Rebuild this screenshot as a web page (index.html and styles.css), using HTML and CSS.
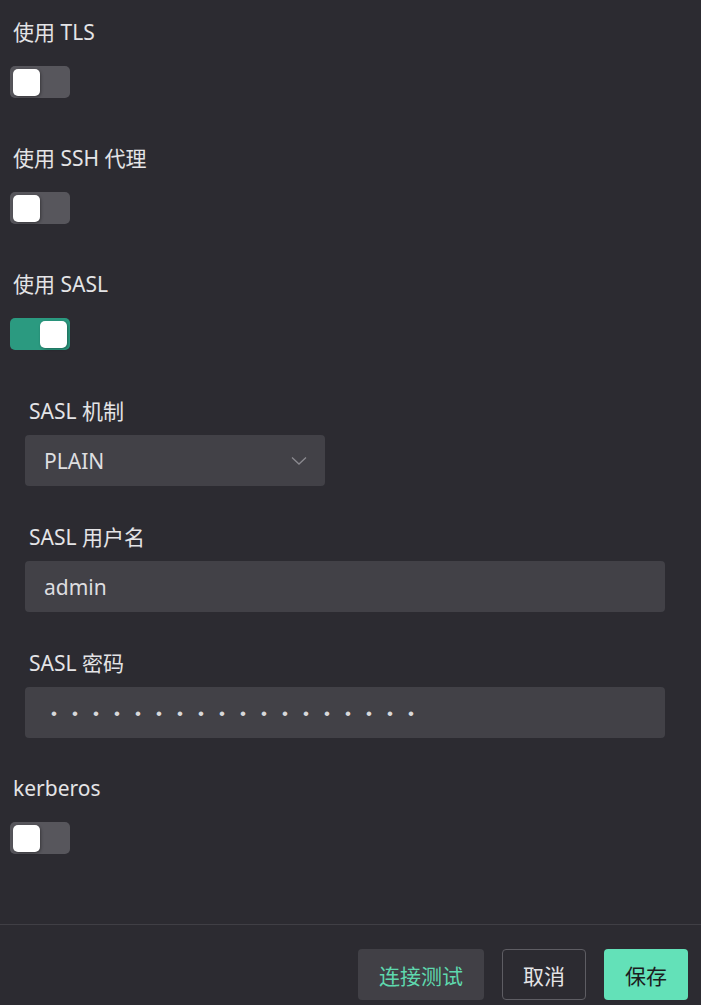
FILE: index.html
```html
<!DOCTYPE html>
<html lang="zh-CN">
<head>
<meta charset="utf-8">
<title>SASL 设置</title>
<link rel="stylesheet" href="styles.css">
</head>
<body>
<div class="page">
  <div class="form">
    <div class="field">
      <div class="label">使用 TLS</div>
      <div class="switch"><span class="knob"></span></div>
    </div>
    <div class="field">
      <div class="label">使用 SSH 代理</div>
      <div class="switch"><span class="knob"></span></div>
    </div>
    <div class="field">
      <div class="label">使用 SASL</div>
      <div class="switch on"><span class="knob"></span></div>
    </div>
    <div class="nested">
      <div class="subfield">
        <div class="label sub">SASL 机制</div>
        <div class="select">
          <span class="value">PLAIN</span>
          <svg class="chevron" width="16" height="8" viewBox="0 0 16 8"><path d="M1 0.5 L8 7 L15 0.5" fill="none" stroke="#8b8a90" stroke-width="1.3"/></svg>
        </div>
      </div>
      <div class="subfield">
        <div class="label sub">SASL 用户名</div>
        <div class="input"><span class="value">admin</span></div>
      </div>
      <div class="subfield">
        <div class="label sub">SASL 密码</div>
        <div class="input"><span class="dots">••••••••••••••••••</span></div>
      </div>
    </div>
    <div class="field">
      <div class="label">kerberos</div>
      <div class="switch"><span class="knob"></span></div>
    </div>
  </div>
  <div class="footer">
    <button class="btn test">连接测试</button>
    <button class="btn cancel">取消</button>
    <button class="btn save">保存</button>
  </div>
</div>
</body>
</html>
```
FILE: styles.css
```css
html, body {
  margin: 0;
  padding: 0;
  background: #2c2b31;
}
body {
  font-family: "Noto Sans", "Noto Sans CJK SC", sans-serif;
  color: #e2e2e4;
  width: 701px;
  height: 1005px;
  overflow: hidden;
}
.page {
  display: flex;
  flex-direction: column;
}
.form {
  padding: 20px 0 0 10px;
  height: 924px;
  box-sizing: border-box;
  display: flex;
  flex-direction: column;
}
.field {
  display: flex;
  flex-direction: column;
  align-items: flex-start;
  margin-bottom: 48px;
}
.label {
  font-size: 21px;
  line-height: 24px;
  height: 24px;
  padding-left: 3px;
  color: #e4e4e6;
  white-space: nowrap;
}
.field .label {
  margin-bottom: 22px;
}
.switch {
  width: 60px;
  height: 32px;
  border-radius: 5px;
  background: #57565c;
  position: relative;
  box-sizing: border-box;
}
.switch .knob {
  position: absolute;
  left: 3px;
  top: 3px;
  width: 27px;
  height: 27px;
  border-radius: 5px;
  background: #ffffff;
  box-shadow: 1px 1px 3px rgba(0,0,0,0.35);
}
.switch.on {
  background: #2b9a80;
}
.switch.on .knob {
  left: 30px;
}
.nested {
  padding-left: 15px;
  padding-top: 1px;
  display: flex;
  flex-direction: column;
  gap: 39px;
  margin-bottom: 38px;
}
.subfield {
  display: flex;
  flex-direction: column;
  align-items: flex-start;
}
.label.sub {
  padding-left: 4px;
  margin-bottom: 12px;
}
.select, .input {
  height: 51px;
  background: #424147;
  border-radius: 4px;
  box-sizing: border-box;
  display: flex;
  align-items: center;
  padding: 0 18px 0 19px;
}
.select {
  width: 300px;
  justify-content: space-between;
}
.input {
  width: 640px;
}
.value {
  font-size: 21px;
  color: #dedee0;
  line-height: 24px;
}
.chevron {
  margin-top: 1px;
}
.dots {
  font-family: "Liberation Sans", sans-serif;
  font-size: 17px;
  letter-spacing: 15.05px;
  color: #d8d8da;
  padding-left: 7px;
  padding-top: 2px;
}
.footer {
  border-top: 1px solid #403f45;
  display: flex;
  justify-content: flex-end;
  gap: 18px;
  padding: 24px 13px 0 0;
}
.btn {
  font-family: "Noto Sans CJK SC", sans-serif;
  font-size: 21px;
  height: 51px;
  border-radius: 4px;
  border: 1px solid transparent;
  padding: 0 10px;
  cursor: pointer;
  line-height: 24px;
}
.btn.test {
  background: #414046;
  color: #5fd8ae;
  width: 126px;
}
.btn.cancel {
  background: transparent;
  border-color: #5e5d63;
  color: #e4e4e6;
  width: 84px;
}
.btn.save {
  background: #63e1b8;
  color: #1c1c20;
  width: 84px;
}
```
